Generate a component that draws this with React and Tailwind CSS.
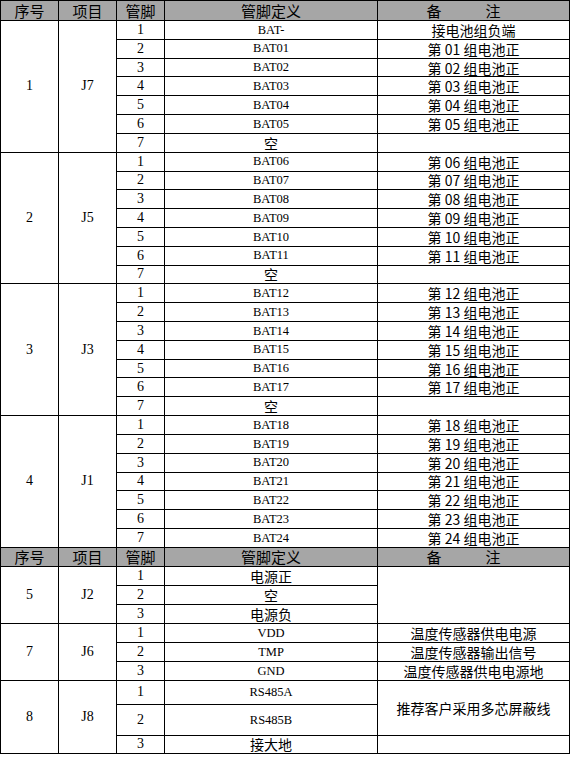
const head = ["序号", "项目", "管脚", "管脚定义"];

const batteryGroups = [
  {
    no: "1",
    item: "J7",
    pins: ["BAT-", "BAT01", "BAT02", "BAT03", "BAT04", "BAT05", "空"],
    notes: ["接电池组负端", "第 01 组电池正", "第 02 组电池正", "第 03 组电池正", "第 04 组电池正", "第 05 组电池正", ""],
  },
  {
    no: "2",
    item: "J5",
    pins: ["BAT06", "BAT07", "BAT08", "BAT09", "BAT10", "BAT11", "空"],
    notes: ["第 06 组电池正", "第 07 组电池正", "第 08 组电池正", "第 09 组电池正", "第 10 组电池正", "第 11 组电池正", ""],
  },
  {
    no: "3",
    item: "J3",
    pins: ["BAT12", "BAT13", "BAT14", "BAT15", "BAT16", "BAT17", "空"],
    notes: ["第 12 组电池正", "第 13 组电池正", "第 14 组电池正", "第 15 组电池正", "第 16 组电池正", "第 17 组电池正", ""],
  },
  {
    no: "4",
    item: "J1",
    pins: ["BAT18", "BAT19", "BAT20", "BAT21", "BAT22", "BAT23", "BAT24"],
    notes: ["第 18 组电池正", "第 19 组电池正", "第 20 组电池正", "第 21 组电池正", "第 22 组电池正", "第 23 组电池正", "第 24 组电池正"],
  },
];

const latin = "font-['Liberation_Serif','Noto_Sans_CJK_SC',serif]";
const cjk = "font-['Noto_Sans_CJK_SC',sans-serif]";
const num = `text-[14px] ${latin}`;

function Cell({ className = "", children }) {
  return (
    <div className={`flex items-center justify-center overflow-hidden whitespace-nowrap border-r border-b border-black leading-none text-black ${className}`}>
      {children}
    </div>
  );
}

function HeaderRow() {
  return (
    <>
      {head.map((h) => (
        <Cell key={h} className={`bg-[#a6a6a6] text-[15px] ${cjk}`}>
          {h}
        </Cell>
      ))}
      <Cell className={`gap-[44px] bg-[#a6a6a6] pr-[20px] text-[15px] ${cjk}`}>
        <span>备</span>
        <span>注</span>
      </Cell>
    </>
  );
}

function PinText({ text }) {
  const isCjk = /[\u4e00-\u9fff]/.test(text);
  return <Cell className={isCjk ? `text-[14px] ${cjk}` : `text-[12.5px] ${latin}`}>{text}</Cell>;
}

export default function App() {
  return (
    <div className="min-h-screen bg-white">
      <div className="grid w-[570px] grid-cols-[58px_58px_48px_213px_192px] grid-rows-[20px_repeat(28,18.82px)_19px_repeat(6,19px)_24px_31px_18px] border-t border-l border-black">
        <HeaderRow />

        {batteryGroups.map((g) => (
          <div key={g.no} className="contents">
            <Cell className={`row-span-7 ${num}`}>{g.no}</Cell>
            <Cell className={`row-span-7 ${num}`}>{g.item}</Cell>
            {g.pins.map((p, i) => (
              <div key={i} className="contents">
                <Cell className={num}>{i + 1}</Cell>
                <PinText text={p} />
                <Cell className={`text-[14px] ${cjk}`}>{g.notes[i]}</Cell>
              </div>
            ))}
          </div>
        ))}

        <HeaderRow />

        {/* J2 power */}
        <Cell className={`row-span-3 ${num}`}>5</Cell>
        <Cell className={`row-span-3 ${num}`}>J2</Cell>
        <Cell className={num}>1</Cell>
        <PinText text="电源正" />
        <Cell className="row-span-3" />
        <Cell className={num}>2</Cell>
        <PinText text="空" />
        <Cell className={num}>3</Cell>
        <PinText text="电源负" />

        {/* J6 temperature sensor */}
        <Cell className={`row-span-3 ${num}`}>7</Cell>
        <Cell className={`row-span-3 ${num}`}>J6</Cell>
        <Cell className={num}>1</Cell>
        <PinText text="VDD" />
        <Cell className={`text-[14px] ${cjk}`}>温度传感器供电电源</Cell>
        <Cell className={num}>2</Cell>
        <PinText text="TMP" />
        <Cell className={`text-[14px] ${cjk}`}>温度传感器输出信号</Cell>
        <Cell className={num}>3</Cell>
        <PinText text="GND" />
        <Cell className={`text-[14px] ${cjk}`}>温度传感器供电电源地</Cell>

        {/* J8 RS485 */}
        <Cell className={`row-span-3 ${num}`}>8</Cell>
        <Cell className={`row-span-3 ${num}`}>J8</Cell>
        <Cell className={num}>1</Cell>
        <PinText text="RS485A" />
        <Cell className={`row-span-2 text-[14px] ${cjk}`}>推荐客户采用多芯屏蔽线</Cell>
        <Cell className={num}>2</Cell>
        <PinText text="RS485B" />
        <Cell className={num}>3</Cell>
        <PinText text="接大地" />
        <Cell />
      </div>
    </div>
  );
}
